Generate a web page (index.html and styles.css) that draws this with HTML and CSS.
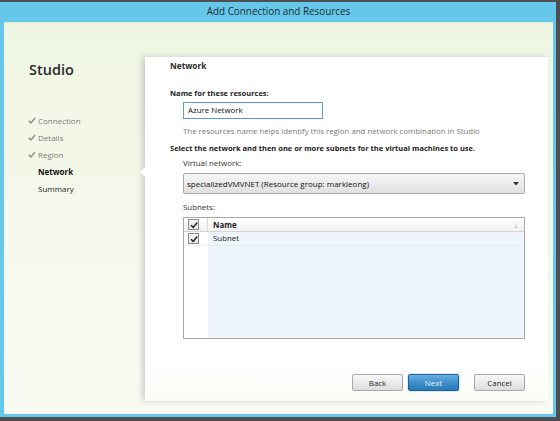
FILE: index.html
```html
<!DOCTYPE html>
<html>
<head>
<meta charset="utf-8">
<link rel="stylesheet" href="styles.css">
</head>
<body>
<div class="window">
  <div class="titlebar">Add Connection and Resources</div>
  <div class="client">
    <aside class="sidebar">
      <div class="brand">Studio</div>
      <ul class="steps">
        <li class="done"><svg class="tick" viewBox="0 0 8 7" width="8" height="7"><path d="M0.8 3.8 L2.9 5.9 L7.2 0.9" fill="none" stroke="#8a8a8a" stroke-width="1.4"/></svg>Connection</li>
        <li class="done"><svg class="tick" viewBox="0 0 8 7" width="8" height="7"><path d="M0.8 3.8 L2.9 5.9 L7.2 0.9" fill="none" stroke="#8a8a8a" stroke-width="1.4"/></svg>Details</li>
        <li class="done"><svg class="tick" viewBox="0 0 8 7" width="8" height="7"><path d="M0.8 3.8 L2.9 5.9 L7.2 0.9" fill="none" stroke="#8a8a8a" stroke-width="1.4"/></svg>Region</li>
        <li class="current">Network</li>
        <li class="todo">Summary</li>
      </ul>
    </aside>
    <main class="panel">
      <span class="notch"></span>
      <h1 class="heading">Network</h1>
      <div class="label strong">Name for these resources:</div>
      <div class="indent">
        <div class="textbox">Azure Network</div>
        <div class="help">The resources name helps identify this region and network combination in Studio</div>
      </div>
      <div class="label strong gap-sel">Select the network and then one or more subnets for the virtual machines to use.</div>
      <div class="indent">
        <div class="label sub">Virtual network:</div>
        <div class="dropdown"><span>specializedVMVNET (Resource group: markleong)</span><svg class="caret" viewBox="0 0 6 4" width="6" height="4"><path d="M0 0 H6 L3 3.5 Z" fill="#333"/></svg></div>
        <div class="label sub subnets">Subnets:</div>
        <div class="grid">
          <div class="grid-head">
            <div class="col-check"><span class="cb"><svg viewBox="0 0 10 10" width="10" height="10"><path d="M2 5.2 L4.2 7.4 L8.2 2.6" fill="none" stroke="#222" stroke-width="1.5"/></svg></span></div>
            <div class="col-name">Name</div>
            <div class="sort">&#8595;</div>
          </div>
          <div class="grid-body">
            <div class="col-white">
              <div class="cell-check"><span class="cb"><svg viewBox="0 0 10 10" width="10" height="10"><path d="M2 5.2 L4.2 7.4 L8.2 2.6" fill="none" stroke="#222" stroke-width="1.5"/></svg></span></div>
            </div>
            <div class="col-blue">
              <div class="cell-name">Subnet</div>
            </div>
          </div>
        </div>
      </div>
      <div class="buttons">
        <button class="btn">Back</button>
        <button class="btn primary">Next</button>
        <button class="btn cancel">Cancel</button>
      </div>
    </main>
  </div>
</div>
</body>
</html>
```
FILE: styles.css
```css
* { box-sizing: border-box; }
html, body { margin: 0; padding: 0; }
body {
  width: 560px;
  height: 421px;
  background: #4d4f51;
  padding-top: 2px;
  font-family: "Open Sans", "Noto Sans", sans-serif;
  overflow: hidden;
}
.window {
  width: 556px;
  height: 415px;
  background: #65c8ea;
  padding: 0 3px 3px 4px;
  display: flex;
  flex-direction: column;
}
.titlebar {
  height: 20px;
  line-height: 19px;
  text-align: center;
  font-size: 9.9px;
  color: #1f2a30;
}
.client {
  flex: 1;
  display: flex;
  background: linear-gradient(180deg, #eff5e3 0%, #f4f8ea 45%, #f9fbf2 100%);
  border-top: 1px solid #dfeccb;
  padding: 34px 5px 13px 0;
}
.sidebar {
  width: 141px;
  padding: 3px 0 0 25px;
}
.brand {
  font-size: 14.5px;
  font-weight: 600;
  line-height: 20px;
  color: #2b2b2b;
}
.steps {
  list-style: none;
  margin: 32px 0 0;
  padding: 0;
}
.steps li {
  height: 17px;
  line-height: 17px;
  font-size: 8px;
  padding-left: 9px;
  position: relative;
  color: #1e1e1e;
}
.steps li.done { color: #7b7b7b; }
.steps li.current { font-weight: 700; color: #111; }
.tick {
  position: absolute;
  left: -1px;
  top: 5px;
}
.panel {
  flex: 1;
  position: relative;
  background: linear-gradient(180deg, #ffffff 0%, #ffffff 88%, #fbfcf6 100%);
  box-shadow: -3px 0 5px rgba(60, 70, 80, 0.22);
  padding: 3px 23px 10px 25px;
  display: flex;
  flex-direction: column;
}
.notch {
  position: absolute;
  left: -5px;
  top: 110px;
  width: 0;
  height: 0;
  border-top: 5px solid transparent;
  border-bottom: 5px solid transparent;
  border-right: 5px solid #ffffff;
}
.heading {
  margin: 0;
  font-size: 8.3px;
  font-weight: 700;
  line-height: 12px;
  color: #2a2a2a;
}
.label {
  font-size: 7.9px;
  line-height: 12px;
  color: #222;
}
.strong { font-weight: 700; margin-top: 15px; font-size: 7.5px; }
.gap-sel { margin-top: 5px; }
.indent { padding-left: 13px; }
.textbox {
  margin-top: 3px;
  width: 140px;
  height: 17px;
  border: 1px solid #5c9bd6;
  background: #fff;
  font-size: 7.9px;
  line-height: 15px;
  padding-left: 4px;
  color: #111;
}
.help {
  margin-top: 6px;
  font-size: 7.85px;
  line-height: 12px;
  color: #7a7a7a;
}
.sub { margin-top: 3px; color: #333; }
.dropdown {
  margin-top: 4px;
  height: 21px;
  width: 342px;
  border: 1px solid #ababab;
  border-radius: 2px;
  background: linear-gradient(180deg, #f6f6f6 0%, #ebebeb 50%, #e0e0e0 100%);
  display: flex;
  align-items: center;
  justify-content: space-between;
  padding: 0 5px 0 3px;
  font-size: 8px;
  color: #111;
}
.caret { margin-top: 1px; }
.subnets { margin-top: 7px; }
.grid {
  margin-top: 4px;
  width: 342px;
  height: 122px;
  border: 1px solid #a9a9a9;
  display: flex;
  flex-direction: column;
  background: #fff;
}
.grid-head {
  height: 14px;
  display: flex;
  align-items: center;
  background: linear-gradient(180deg, #ffffff 0%, #f1f1f1 100%);
  border-bottom: 1px solid #d5d5d5;
  font-size: 7.9px;
}
.col-check {
  width: 24px;
  height: 100%;
  border-right: 1px solid #d9d9d9;
  display: flex;
  align-items: center;
  padding-left: 4px;
}
.col-name {
  flex: 1;
  padding-left: 5px;
  font-weight: 700;
  color: #222;
}
.sort {
  width: 10px;
  color: #8a8a8a;
  font-size: 8px;
}
.cb {
  display: block;
  width: 11px;
  height: 11px;
  border: 1px solid #8c8c8c;
  background: linear-gradient(180deg, #f7f7f7, #e6e6e6);
  position: relative;
}
.cb svg { position: absolute; left: 0; top: 0; }
.grid-body {
  flex: 1;
  display: flex;
}
.col-white {
  width: 24px;
  background: #fff;
}
.col-blue {
  flex: 1;
  background: #eef5fd;
}
.cell-check {
  height: 14px;
  display: flex;
  align-items: center;
  padding-left: 4px;
  border-bottom: 1px solid #f2f2f2;
}
.cell-name {
  height: 14px;
  line-height: 13px;
  padding-left: 5px;
  font-size: 7.9px;
  color: #222;
  border-bottom: 1px solid #dfe8f3;
}
.buttons {
  margin-top: auto;
  display: flex;
  justify-content: flex-end;
  padding-right: 0;
}
.btn {
  width: 51px;
  height: 17px;
  margin: 0;
  padding: 0;
  border: 1px solid #a8a8a8;
  border-radius: 2px;
  background: linear-gradient(180deg, #f7f7f7 0%, #ececec 50%, #dcdcdc 100%);
  font-family: "Open Sans", "Noto Sans", sans-serif;
  font-size: 7.9px;
  color: #222;
}
.btn + .btn { margin-left: 5px; }
.btn.cancel { margin-left: 15px; }
.btn.primary {
  background: linear-gradient(180deg, #67b1e2 0%, #3f8fcc 50%, #2b7ab9 100%);
  border-color: #1f5f93;
  color: #e9f4fc;
  box-shadow: 0 0 2px rgba(80, 160, 220, 0.7);
}
```
